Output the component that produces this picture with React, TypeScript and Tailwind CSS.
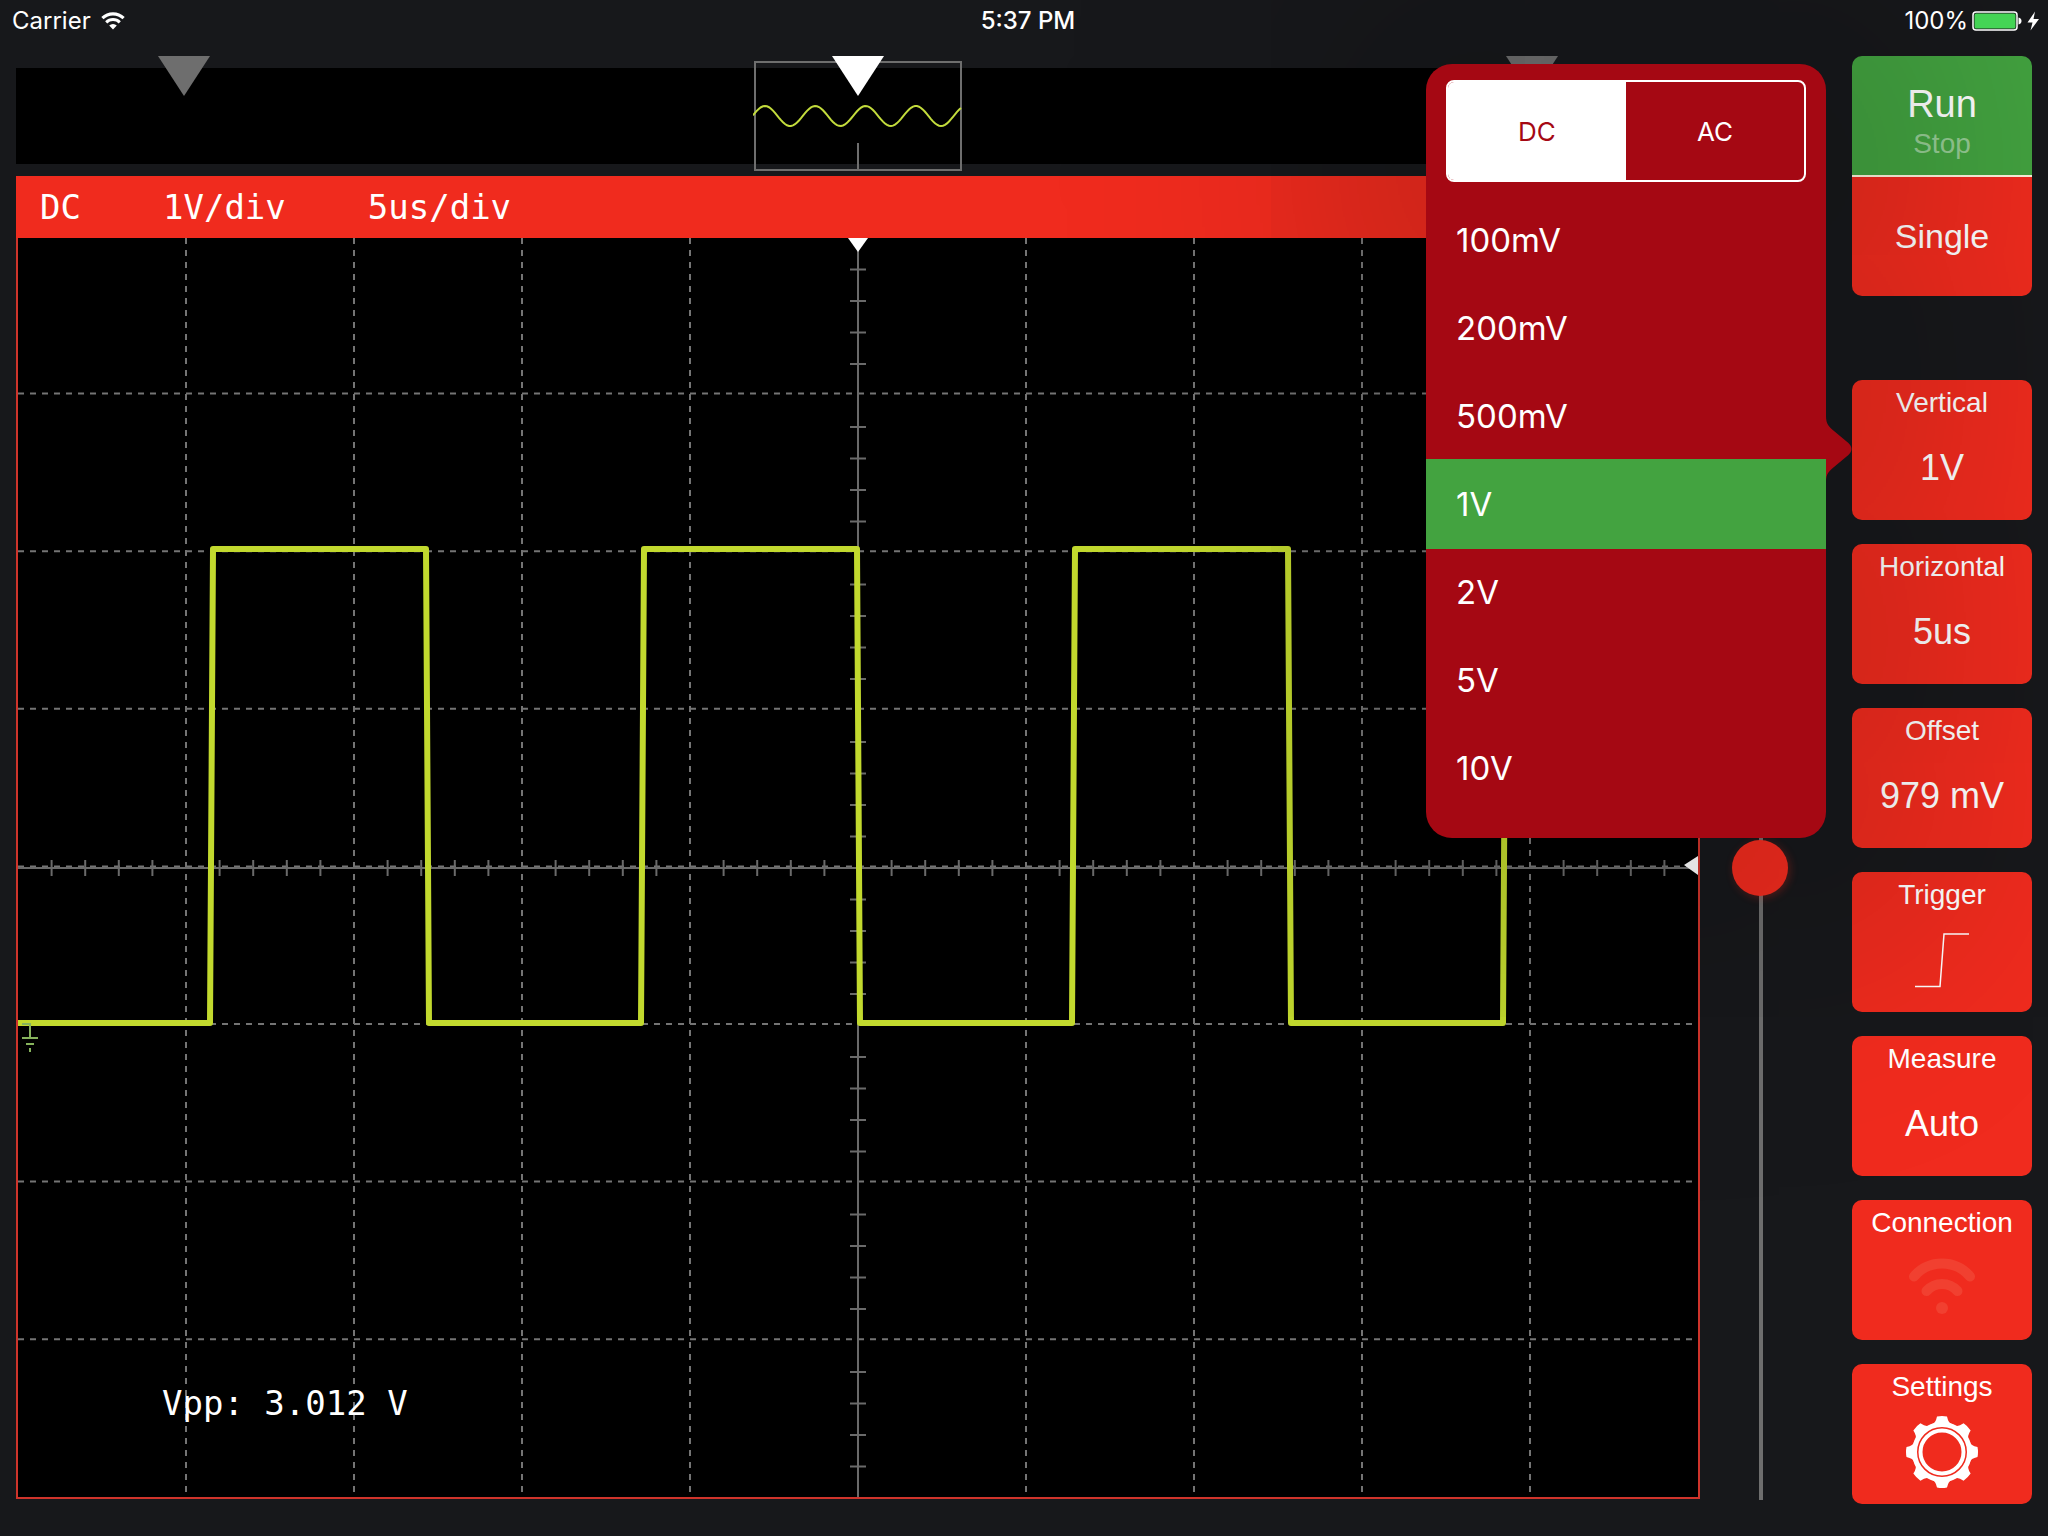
import React, { useState } from 'react';

const VOLTS = ['100mV', '200mV', '500mV', '1V', '2V', '5V', '10V'];

const WAVE =
  'M0 785 H192 L195 311 H408 L411 785 H623 L626 311 H839 L842 785 H1054 L1057 311 H1270 L1273 785 H1485 L1488 311 H1680';

// small sine trace shown in the overview window
const SINE = Array.from({ length: 105 }, (_, i) => {
  const x = i * 2;
  const y = 55 - 10 * Math.cos(((x - 12) / 50.3) * 2 * Math.PI);
  return `${x},${y.toFixed(2)}`;
}).join(' ');

function StatusBar() {
  return (
    <header className="relative z-20 grid grid-cols-3 items-center h-[42px] pl-3 pr-1 text-2xl text-white">
      <div className="flex items-center gap-2.5">
        <span>Carrier</span>
        <svg className="w-6 h-[18px]" viewBox="0 0 24 18" fill="none" stroke="#fff">
          <path d="M1.4 6.2a15.4 15.4 0 0 1 21.2 0" strokeWidth="3.2" />
          <path d="M5.2 10.4a9.7 9.7 0 0 1 13.6 0" strokeWidth="3" />
          <path d="M12 17.6l-3.8-4a5.4 5.4 0 0 1 7.6 0z" fill="#fff" stroke="none" />
        </svg>
      </div>
      <span className="text-center font-medium">5:37 PM</span>
      <div className="flex items-center justify-end gap-0.5">
        <span>100%</span>
        <svg className="w-[74px] h-5" viewBox="0 0 74 20">
          <rect x="3" y="1" width="44" height="18" rx="3" fill="none" stroke="#fff" strokeWidth="1.5" />
          <rect x="4.500" y="2.500" width="41" height="15" rx="1.5" fill="#44d455" />
          <path d="M48.500 6.500c4 .5 4 6.500 0 7z" fill="#fff" />
          <path d="M65 0.500L57.500 11.500h5L60.500 19.500 69 8h-5.500z" fill="#fff" />
        </svg>
      </div>
    </header>
  );
}

function Marker({ className }: { className: string }) {
  return (
    <svg className={`absolute -top-3 w-[52px] h-10 -translate-x-1/2 ${className}`} viewBox="0 0 52 40" fill="currentColor">
      <path d="M0 0h52L26 40z" />
    </svg>
  );
}

function Overview() {
  return (
    <div className="relative h-24 bg-black">
      <Marker className="left-[10%] text-[#6e6e6e]" />
      <Marker className="left-[90%] text-[#6e6e6e]" />
      <div className="absolute left-1/2 -top-[7px] w-[208px] h-[110px] -translate-x-1/2 border-2 border-[#6e6e6e]">
        <svg className="absolute -left-[3px] -top-0.5 w-[210px] h-[110px]" viewBox="0 0 210 110" fill="none">
          <polyline points={SINE} stroke="#c3dc3c" strokeWidth="2" />
          <path d="M105 82v26" stroke="#6e6e6e" strokeWidth="2" />
        </svg>
      </div>
      <Marker className="left-1/2 text-white" />
    </div>
  );
}

function Scope() {
  const minor = Array.from({ length: 49 }, (_, i) => i + 1).filter((i) => i % 5 !== 0);
  const minorY = Array.from({ length: 39 }, (_, i) => i + 1).filter((i) => i % 5 !== 0);

  return (
    <div className="relative flex-1 bg-black border-2 border-t-0 border-[#cf342b]">
      <svg className="absolute inset-0 w-full h-full" viewBox="0 0 1680 1259" preserveAspectRatio="none" fill="none">
        <g stroke="#747474" strokeWidth="2" strokeDasharray="6 6">
          {[1, 2, 3, 4, 6, 7, 8, 9].map((i) => (
            <path key={i} d={`M${i * 168} 0V1259`} />
          ))}
          {[1, 2, 3, 4, 5, 6, 7].map((i) => (
            <path key={i} d={`M0 ${i * 157.6 - 2}H1680`} />
          ))}
        </g>
        <g stroke="#6a6a6a" strokeWidth="2">
          <path d="M840 0V1259M0 630H1680" />
          {minor.map((i) => (
            <path key={i} d={`M${i * 33.6} 622v16`} />
          ))}
          {minorY.map((i) => (
            <path key={i} d={`M832 ${i * 31.5}h16`} />
          ))}
        </g>
        <path d={WAVE} stroke="#c2d92e" strokeWidth="6" strokeLinejoin="round" />
        <path d="M4 786h8v14M4 800h16M8 806h8M12 810v4" stroke="#86b35c" strokeWidth="2" />
        <path d="M830 0h20l-10 14z" fill="#fff" />
        <path d="M1680 618v19l-14-10z" fill="#fff" />
      </svg>
      <p className="absolute left-36 bottom-[74px] font-['DejaVu_Sans_Mono',monospace] text-[34px] leading-10 text-white">
        Vpp: 3.012 V
      </p>
    </div>
  );
}

function VoltsPopover({ value, onChange }: { value: string; onChange: (v: string) => void }) {
  const [coupling, setCoupling] = useState('DC');

  return (
    <div className="absolute right-full -top-[316px] z-10 w-[400px] mr-[26px] pt-4 pb-[26px] rounded-[26px] bg-[#a50813] font-['Inter',sans-serif] shadow-[0_0_350px_120px_rgba(0,0,0,0.17)]">
      <svg className="absolute left-full top-[352px] w-[26px] h-[66px]" viewBox="0 0 26 66">
        <path d="M0 0C0 8 3 11 8 15L20 25Q31 33 20 41L8 51C3 55 0 58 0 66z" fill="#a50813" />
      </svg>
      <div className="flex h-[102px] mx-5 mb-3.5 rounded-lg border-2 border-white overflow-hidden">
        {['DC', 'AC'].map((c) => (
          <button
            key={c}
            onClick={() => setCoupling(c)}
            className={`${coupling === c ? 'bg-white text-[#a50813]' : 'text-white'} flex-1 text-[26px]`}
          >
            {c}
          </button>
        ))}
      </div>
      <ul>
        {VOLTS.map((v) => (
          <li key={v}>
            <button
              onClick={() => onChange(v)}
              className={`${value === v ? 'bg-[#43a340] shadow-[0_1px_0_#43a340,0_-1px_0_#43a340]' : ''} block w-full h-22 pt-0.5 pl-[30px] text-left text-[33px] text-white`}
            >
              {v}
            </button>
          </li>
        ))}
      </ul>
    </div>
  );
}

function Tile({ title, children }: { title: string; children: React.ReactNode }) {
  return (
    <button className="flex flex-col items-center w-full h-[140px] pt-[7px] rounded-[10px] bg-[#f02b1e] text-white">
      <span className="text-[28px] leading-8">{title}</span>
      <span className="flex items-center justify-center h-[98px] text-4xl">{children}</span>
    </button>
  );
}

function Gear() {
  return (
    <svg className="w-[72px] h-[72px]" viewBox="-36 -36 72 72">
      <circle r="27.500" fill="none" stroke="#fff" strokeWidth="5" />
      <circle r="21.500" fill="none" stroke="#fff" strokeWidth="4" />
      {[0, 45, 90, 135, 180, 225, 270, 315].map((a) => (
        <path key={a} d="M-10-28Q-6.500-28.500-5-35.500Q0-36.500 5-35.500Q6.500-28.500 10-28z" fill="#fff" transform={`rotate(${a})`} />
      ))}
    </svg>
  );
}

export default function App() {
  const [volts, setVolts] = useState('1V');

  return (
    <div className="flex flex-col min-h-screen bg-[#17181b] font-['Inter',sans-serif] overflow-hidden">
      <StatusBar />
      <div className="flex flex-1 px-4 pt-3.5">
        <main className="flex flex-col flex-1 pt-3 pb-[37px]">
          <Overview />
          <div className="flex items-center gap-[82px] h-[62px] mt-3 pl-6 bg-[#f02b1e] font-['DejaVu_Sans_Mono',monospace] text-[34px] leading-10 text-white">
            <span>DC</span>
            <span>{volts}/div</span>
            <span>5us/div</span>
          </div>
          <Scope />
        </main>

        <div className="flex w-[152px] pl-8 pt-[180px] pb-9">
          <input
            type="range"
            aria-label="Trigger level"
            defaultValue={50}
            className="w-14 appearance-none [writing-mode:vertical-lr] bg-[linear-gradient(to_right,transparent_27px,#6e6e6e_27px,#6e6e6e_31px,transparent_31px)] [&::-webkit-slider-thumb]:appearance-none [&::-webkit-slider-thumb]:size-14 [&::-webkit-slider-thumb]:rounded-full [&::-webkit-slider-thumb]:bg-[#f02b1e] [&::-webkit-slider-thumb]:shadow-[2px_2px_8px_rgba(240,43,30,0.3)]"
          />
        </div>

        <aside className="flex flex-col gap-6 w-[180px] pb-8 font-['Liberation_Sans',sans-serif]">
          <div className="mb-15 rounded-[10px] overflow-hidden text-white">
            <button className="flex flex-col items-center justify-center w-full h-[119px] pt-2 bg-[#43a340]">
              <span className="text-[38px] leading-12">Run</span>
              <span className="text-[28px] leading-8 text-white/45">Stop</span>
            </button>
            <button className="w-full h-[121px] border-t-2 border-[#fff3dc] bg-[#f02b1e] text-[34px]">Single</button>
          </div>
          <div className="relative">
            <Tile title="Vertical">{volts}</Tile>
            <VoltsPopover value={volts} onChange={setVolts} />
          </div>
          <Tile title="Horizontal">5us</Tile>
          <Tile title="Offset">979 mV</Tile>
          <Tile title="Trigger">
            <svg className="w-14 h-14" viewBox="0 0 56 56" fill="none" stroke="#fff" strokeWidth="1.500">
              <path d="M1 54.500h25L30 2h25" />
            </svg>
          </Tile>
          <Tile title="Measure">Auto</Tile>
          <Tile title="Connection">
            <svg className="w-[66px] h-15" viewBox="0 0 66 60" fill="none" stroke="#f14030" strokeWidth="10" strokeLinecap="round">
              <path d="M5 18.500Q16 5.500 33 5.500T61 18.500" />
              <path d="M17.500 33Q24 26 33 26T48.500 33" />
              <circle cx="33" cy="50" r="6" fill="#f14030" stroke="none" />
            </svg>
          </Tile>
          <Tile title="Settings">
            <Gear />
          </Tile>
        </aside>
      </div>
    </div>
  );
}
